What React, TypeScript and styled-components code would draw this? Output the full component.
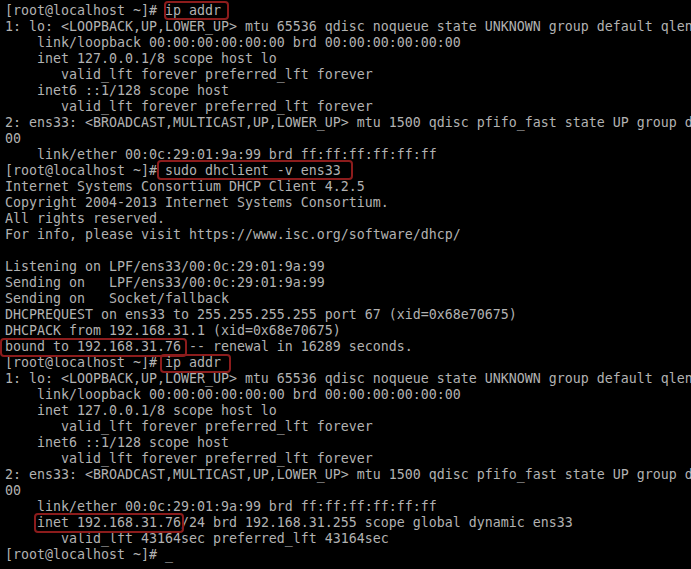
import React from "react";
import styled, { createGlobalStyle } from "styled-components";

const Global = createGlobalStyle`
  html, body {
    margin: 0;
    padding: 0;
    background: #000;
  }
  #root {
    width: 691px;
    height: 569px;
  }
`;

const Screen = styled.div`
  width: 691px;
  height: 569px;
  box-sizing: border-box;
  padding: 3px 0 0 5px;
  background: #000;
  color: #b2b2b2;
  font-family: "DejaVu Sans Mono", "Liberation Mono", monospace;
  font-size: 13.29px;
  line-height: 16px;
  overflow: hidden;
  display: flex;
  flex-direction: column;
`;

const Line = styled.div`
  height: 16px;
  flex: none;
  white-space: pre;
`;

const Mark = styled.span<{ $l: number; $r: number; $t: number; $b: number }>`
  position: relative;
  display: inline-block;
  height: 16px;
  line-height: 16px;
  vertical-align: top;
  &::after {
    content: "";
    position: absolute;
    left: ${(p) => -p.$l}px;
    right: ${(p) => -p.$r}px;
    top: ${(p) => -p.$t}px;
    bottom: ${(p) => -p.$b}px;
    border: 2px solid #8c1c1c;
    border-radius: 4px;
    pointer-events: none;
  }
`;

const Cursor = styled.span`
  display: inline-block;
  width: 8px;
`;

const PROMPT = "[root@localhost ~]# ";

const ipAddrBlock = [
  "1: lo: <LOOPBACK,UP,LOWER_UP> mtu 65536 qdisc noqueue state UNKNOWN group default qlen 1000",
  "    link/loopback 00:00:00:00:00:00 brd 00:00:00:00:00:00",
  "    inet 127.0.0.1/8 scope host lo",
  "       valid_lft forever preferred_lft forever",
  "    inet6 ::1/128 scope host",
  "       valid_lft forever preferred_lft forever",
  "2: ens33: <BROADCAST,MULTICAST,UP,LOWER_UP> mtu 1500 qdisc pfifo_fast state UP group default qlen 10",
  "00",
  "    link/ether 00:0c:29:01:9a:99 brd ff:ff:ff:ff:ff:ff",
];

const dhcpOutput = [
  "Internet Systems Consortium DHCP Client 4.2.5",
  "Copyright 2004-2013 Internet Systems Consortium.",
  "All rights reserved.",
  "For info, please visit https://www.isc.org/software/dhcp/",
  " ",
  "Listening on LPF/ens33/00:0c:29:01:9a:99",
  "Sending on   LPF/ens33/00:0c:29:01:9a:99",
  "Sending on   Socket/fallback",
  "DHCPREQUEST on ens33 to 255.255.255.255 port 67 (xid=0x68e70675)",
  "DHCPACK from 192.168.31.1 (xid=0x68e70675)",
];

export default function App() {
  return (
    <>
      <Global />
      <Screen>
        <Line>
          {PROMPT}
          <Mark $l={1} $r={8} $t={2} $b={1}>ip addr</Mark>
        </Line>
        {ipAddrBlock.map((t, i) => (
          <Line key={"a" + i}>{t}</Line>
        ))}
        <Line>
          {PROMPT}
          <Mark $l={8} $r={12} $t={3} $b={1}>sudo dhclient -v ens33</Mark>
        </Line>
        {dhcpOutput.map((t, i) => (
          <Line key={"d" + i}>{t}</Line>
        ))}
        <Line>
          <Mark $l={5} $r={6} $t={1} $b={2}>bound to 192.168.31.76</Mark>
          {" -- renewal in 16289 seconds."}
        </Line>
        <Line>
          {PROMPT}
          <Mark $l={5} $r={10} $t={1} $b={2}>ip addr</Mark>
        </Line>
        {ipAddrBlock.map((t, i) => (
          <Line key={"b" + i}>{t}</Line>
        ))}
        <Line>
          {"    "}
          <Mark $l={3} $r={3} $t={2} $b={2}>inet 192.168.31.76</Mark>
          {"/24 brd 192.168.31.255 scope global dynamic ens33"}
        </Line>
        <Line>{"       valid_lft 43164sec preferred_lft 43164sec"}</Line>
        <Line>
          {PROMPT}
          <Cursor>_</Cursor>
        </Line>
      </Screen>
    </>
  );
}
